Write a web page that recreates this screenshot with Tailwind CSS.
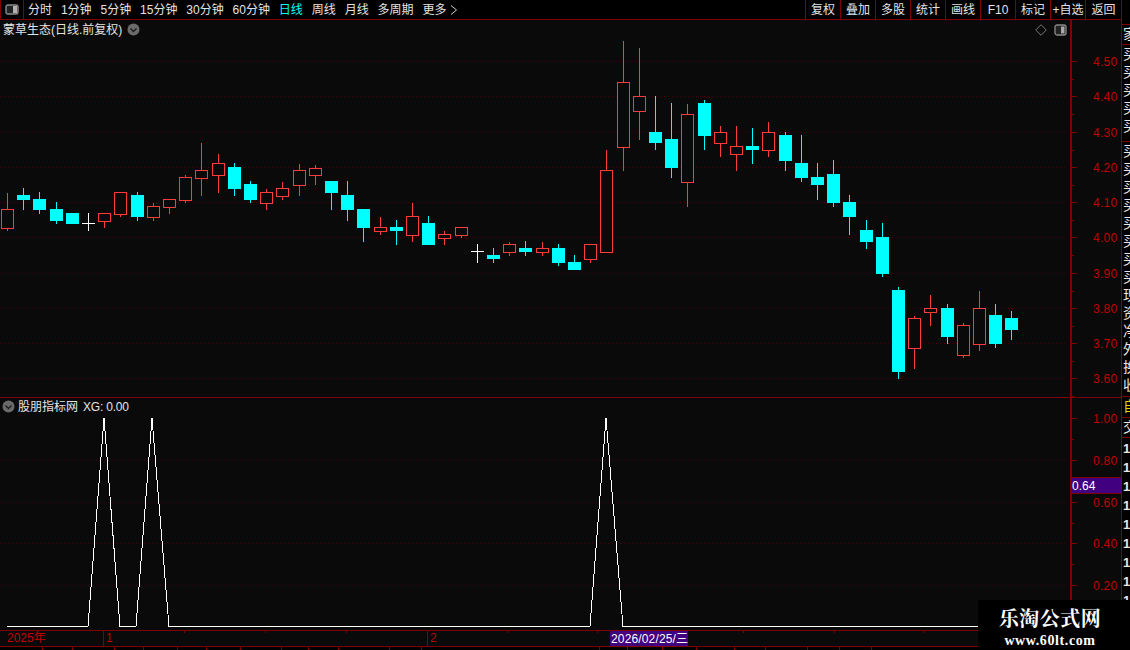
<!DOCTYPE html>
<html lang="zh">
<head>
  <meta charset="UTF-8" />
  <title>蒙草生态</title>
  <script src="https://cdn.jsdelivr.net/npm/@tailwindcss/browser@4"></script>
</head>
<body class="bg-black">
  <div class="relative flex w-[1130px] h-[650px] overflow-hidden bg-black text-[12px] leading-none text-[#e4e4e4] font-['Liberation_Sans','Noto_Sans_CJK_SC',sans-serif]">

    <!-- main column -->
    <div class="flex flex-col w-[1122px] shrink-0 bg-[#0a0a0a]">

      <!-- toolbar -->
      <div class="flex items-center h-5 shrink-0 border-b border-[#800000] bg-black">
        <div class="flex items-center justify-center w-6 h-full border-x border-[#800000]">
          <svg width="14" height="11" viewBox="0 0 14 11"><rect x="1" y="1" width="12" height="9" rx="2" fill="#222" stroke="#8a8a8a" stroke-width="1.4"/><rect x="8" y="2" width="4" height="7" fill="#b0b0b0"/></svg>
        </div>
        <div class="flex items-center gap-[8.9px] pl-1 whitespace-nowrap">
          <span>分时</span><span>1分钟</span><span>5分钟</span><span>15分钟</span><span>30分钟</span><span>60分钟</span>
          <span class="text-[#00ffff]">日线</span><span>周线</span><span>月线</span><span>多周期</span>
          <span class="flex items-center gap-1">更多<svg width="8" height="10" viewBox="0 0 8 10"><path d="M1 0.5 L6.5 5 L1 9.5" fill="none" stroke="#d0d0d0"/></svg></span>
        </div>
        <div class="flex h-full ml-auto">
          <span class="flex items-center justify-center w-[35px] border-l border-[#800000]">复权</span>
          <span class="flex items-center justify-center w-[35px] border-l border-[#800000]">叠加</span>
          <span class="flex items-center justify-center w-[35px] border-l border-[#800000]">多股</span>
          <span class="flex items-center justify-center w-[35px] border-l border-[#800000]">统计</span>
          <span class="flex items-center justify-center w-[35px] border-l border-[#800000]">画线</span>
          <span class="flex items-center justify-center w-[35px] border-l border-[#800000]">F10</span>
          <span class="flex items-center justify-center w-[35px] border-l border-[#800000]">标记</span>
          <span class="flex items-center justify-center w-[35px] border-l border-[#800000]">+自选</span>
          <span class="flex items-center justify-center w-[37px] border-x border-[#800000]">返回</span>
        </div>
      </div>

      <!-- price pane -->
      <div class="relative flex h-[378px] shrink-0 border-b border-[#800000]">
        <div class="relative w-[1070px] shrink-0">
          <svg id="priceChart" class="block" width="1070" height="377" viewBox="0 20 1070 377" shape-rendering="crispEdges"></svg>
          <div class="absolute left-[3px] top-[3px] flex items-center gap-[5px] whitespace-nowrap">
            <span>蒙草生态(日线.前复权)</span>
            <svg width="13" height="13" viewBox="0 0 13 13"><circle cx="6.5" cy="6.5" r="6" fill="#6a6a6a"/><path d="M3.5 5.5 L6.5 8.5 L9.5 5.5" fill="none" stroke="#1c1c1c" stroke-width="1.4"/></svg>
          </div>
          <div class="absolute right-[3px] top-[4px] flex items-center gap-[7px]">
            <svg width="12" height="12" viewBox="0 0 12 12"><path d="M6 0.7 L11.3 6 L6 11.3 L0.7 6 Z" fill="none" stroke="#777"/></svg>
            <svg width="13" height="12" viewBox="0 0 13 12"><rect x="1" y="1" width="11" height="10" rx="2" fill="#222" stroke="#8a8a8a" stroke-width="1.3"/><rect x="7" y="2.5" width="3.5" height="7" fill="#a8a8a8"/></svg>
          </div>
        </div>
        <div class="w-[52px] border-l-2 border-r border-[#800000]">
          <svg id="priceAxis" class="block fill-[#c00000] text-[12px] tracking-[0.3px]" width="49" height="377" viewBox="1072 20 49 377" shape-rendering="crispEdges"></svg>
        </div>
      </div>

      <!-- indicator pane -->
      <div class="relative flex h-[232px] shrink-0">
        <div class="relative w-[1070px] shrink-0">
          <svg id="subChart" class="block" width="1070" height="232" viewBox="0 398 1070 232"></svg>
          <div class="absolute left-[2px] top-[2px] flex items-center gap-[3px] whitespace-nowrap">
            <svg width="13" height="13" viewBox="0 0 13 13"><circle cx="6.5" cy="6.5" r="6" fill="#6a6a6a"/><path d="M3.5 5.5 L6.5 8.5 L9.5 5.5" fill="none" stroke="#1c1c1c" stroke-width="1.4"/></svg>
            <span>股朋指标网</span><span class="ml-[2px] tracking-[-0.2px]">XG: 0.00</span>
          </div>
        </div>
        <div class="relative w-[52px] border-l-2 border-r border-[#800000]">
          <svg id="subAxis" class="block fill-[#c00000] text-[12px] tracking-[0.3px]" width="49" height="232" viewBox="1072 398 49 232" shape-rendering="crispEdges"></svg>
          <div class="absolute left-0 top-[79px] flex items-center w-[49px] h-[17px] border-y border-[#800000] bg-[#400080] text-white">0.64</div>
        </div>
      </div>

      <!-- time axis -->
      <div class="relative h-[17px] shrink-0 border-y border-[#800000] text-[#c00000]">
        <span class="absolute left-[7px] top-[1px]">2025年</span>
        <span class="absolute left-[103px] top-0 h-full pl-[2px] pt-[1px] border-l border-[#800000]">1</span>
        <span class="absolute left-[427px] top-0 h-full pl-[2px] pt-[1px] border-l border-[#800000]">2</span>
        <span class="absolute left-[184px] top-0 h-[2px] border-l border-[#800000]"></span>
        <span class="absolute left-[265px] top-0 h-[2px] border-l border-[#800000]"></span>
        <span class="absolute left-[346px] top-0 h-[2px] border-l border-[#800000]"></span>
        <span class="absolute left-[508px] top-0 h-[2px] border-l border-[#800000]"></span>
        <span class="absolute left-[597px] top-0 h-[2px] border-l border-[#800000]"></span>
        <span class="absolute left-[743px] top-0 h-[2px] border-l border-[#800000]"></span>
        <span class="absolute left-[834px] top-0 h-[2px] border-l border-[#800000]"></span>
        <span class="absolute left-[923px] top-0 h-[2px] border-l border-[#800000]"></span>
        <span class="absolute left-[610px] top-0 flex items-center w-[78px] h-[15px] pl-[1px] bg-[#400080] text-white tracking-[0.15px] whitespace-nowrap">2026/02/25/三</span>
      </div>

      <!-- status row, cut off by the window -->
      <div id="statusRow" class="flex h-[3px] shrink-0 overflow-hidden bg-black"></div>
    </div>

    <!-- neighbouring list, only its left edge is in view -->
    <div class="flex flex-col w-2 shrink-0 overflow-hidden text-[14px] leading-[18px] whitespace-nowrap bg-black text-[#e8e8e8]">
      <div class="h-[25px] shrink-0 border-b border-[#800000]"></div>
      <div class="h-5 shrink-0 pl-[1px] border-b border-[#800000]">家</div>
      <div class="h-[97px] shrink-0 pl-[1px] border-b border-[#800000]">
        <div>买</div><div>买</div><div>买</div><div>买</div><div>买</div>
      </div>
      <div class="h-[255px] shrink-0 pl-[1px] border-b border-[#800000]">
        <div>买</div><div>买</div><div>买</div><div>买</div><div>买</div><div>买</div><div>买</div><div>买</div>
        <div>现</div><div>资</div><div>净</div><div>外</div><div>换</div><div>收</div>
      </div>
      <div class="h-[21px] shrink-0 pl-[1px] border-b border-[#800000] text-[#d8d800]">自</div>
      <div class="h-5 shrink-0 pl-[1px] border-b border-[#800000]">交</div>
      <div class="pt-[1px] pl-[1px] text-[13px] leading-[19px] font-bold">
        <div>1</div><div>1</div><div>1</div><div>1</div><div>1</div><div>1</div><div>1</div><div>1</div><div>1</div><div>1</div><div>1</div>
      </div>
    </div>

    <!-- watermark stamped over the corner -->
    <div class="absolute left-[978px] top-[600px] flex flex-col items-center w-[152px] h-[50px] pr-[8px] pt-[7px] bg-black text-white font-['Liberation_Serif','Noto_Serif_CJK_SC','Noto_Sans_CJK_SC',serif] font-bold">
      <span class="text-[20px] leading-[24px] tracking-[0.5px]">乐淘公式网</span>
      <span class="mt-[2px] text-[14px] leading-[16px] tracking-[0.6px]">www.60lt.com</span>
    </div>
  </div>

  <script>
    const NS = 'http://www.w3.org/2000/svg';
    const UP = '#ff3c3c', DOWN = '#00ffff', CROSS = '#ffffff';

    // high, body top, body bottom, low (screen y), kind
    const candles = [
      [193,209,228,230,'r'],[188,195,199,209,'c'],[192,199,209,213,'c'],[202,209,220,223,'c'],[213,213,223,223,'c'],
      [213,223,223,230,'x'],[213,213,221,227,'r'],[192,192,214,216,'r'],[192,195,216,220,'c'],[203,206,217,220,'r'],
      [199,199,207,213,'r'],[175,177,200,202,'r'],[143,170,178,195,'r'],[154,163,175,192,'r'],[163,167,188,195,'c'],
      [181,184,199,202,'c'],[189,192,203,209,'r'],[182,188,196,199,'r'],[164,170,185,195,'r'],[165,168,175,184,'r'],
      [181,181,192,209,'c'],[181,195,209,220,'c'],[209,209,227,241,'c'],[217,227,231,234,'r'],[220,227,230,244,'c'],
      [203,216,235,241,'r'],[216,223,244,244,'c'],[231,234,238,244,'r'],[227,227,235,237,'r'],[244,251,251,262,'x'],
      [248,255,258,262,'c'],[242,244,252,255,'r'],[241,248,251,255,'c'],[242,248,252,255,'r'],[244,248,262,265,'c'],
      [255,262,269,269,'c'],[244,244,259,262,'r'],[150,170,252,252,'r'],[41,82,147,170,'r'],[48,96,111,139,'r'],
      [96,132,142,149,'c'],[103,139,167,177,'c'],[104,114,182,206,'r'],[100,103,135,149,'c'],[126,132,143,156,'r'],
      [126,146,154,170,'r'],[128,146,149,163,'c'],[122,132,150,156,'r'],[132,135,160,170,'c'],[135,163,177,181,'c'],
      [163,177,184,199,'c'],[160,174,202,206,'c'],[195,202,216,234,'c'],[220,230,241,248,'c'],[223,237,273,276,'c'],
      [287,290,371,378,'c'],[316,318,348,368,'r'],[295,308,312,325,'r'],[304,308,336,343,'c'],[323,325,355,357,'r'],
      [291,308,344,350,'r'],[304,315,343,347,'c'],[311,318,329,339,'c']
    ];

    function el(parent, name, attrs, text) {
      const node = document.createElementNS(NS, name);
      for (const k in attrs) node.setAttribute(k, attrs[k]);
      if (text) node.textContent = text;
      parent.appendChild(node);
      return node;
    }
    function dots(svg, y) {
      el(svg, 'line', { x1: 0, x2: 1067, y1: y + 0.5, y2: y + 0.5, stroke: '#4e0000', 'stroke-dasharray': '1 3' });
    }

    // price chart
    const price = document.getElementById('priceChart');
    [61, 96, 132, 167, 202, 237, 273, 308, 343, 378].forEach(y => dots(price, y));
    candles.forEach((c, i) => {
      const [high, top, bot, low, kind] = c;
      const x = Math.round(1 + i * 16.2);
      const color = kind === 'r' ? UP : kind === 'c' ? DOWN : CROSS;
      el(price, 'rect', { x: x + 6, y: high, width: 1, height: low - high + 1, fill: color });
      if (kind === 'x') el(price, 'rect', { x, y: top, width: 13, height: 1, fill: color });
      if (kind === 'c') el(price, 'rect', { x, y: top, width: 13, height: bot - top + 1, fill: color });
      if (kind === 'r') el(price, 'rect', { x: x + 0.5, y: top + 0.5, width: 12, height: bot - top, fill: '#0a0a0a', stroke: color });
    });

    // axes
    function axis(id, ticks, labels) {
      const svg = document.getElementById(id);
      ticks.forEach(([y, major]) => el(svg, 'rect', { x: 1072, y, width: major ? 5 : 2, height: 1, fill: '#800000' }));
      labels.forEach(([y, t]) => el(svg, 'text', { x: 1093, y: y + 4.5, 'shape-rendering': 'auto' }, t));
    }
    const priceLabels = [[61,'4.50'],[96,'4.40'],[132,'4.30'],[167,'4.20'],[202,'4.10'],[237,'4.00'],[273,'3.90'],[308,'3.80'],[343,'3.70'],[378,'3.60']];
    const priceTicks = [];
    priceLabels.forEach(([y]) => { priceTicks.push([y, true], [y + 18, false]); });
    axis('priceAxis', priceTicks, priceLabels);

    const subLabels = [[418,'1.00'],[460,'0.80'],[502,'0.60'],[543,'0.40'],[585,'0.20']];
    const subTicks = [];
    subLabels.forEach(([y]) => { subTicks.push([y, true], [y + 21, false]); });
    axis('subAxis', subTicks, subLabels);

    // XG signal line
    const sub = document.getElementById('subChart');
    [460, 502, 543, 585].forEach(y => dots(sub, y));
    el(sub, 'polyline', {
      fill: 'none', stroke: '#ffffff', 'stroke-width': 1, 'shape-rendering': 'crispEdges',
      points: '7,626.5 88,626.5 104,418 120,626.5 136,626.5 152,418 169,626.5 590,626.5 606,418 623,626.5 978,626.5'
    });

    // bottom status row
    const row = document.getElementById('statusRow');
    [43,30,42,29,34,29,34,41,27,30,51,32,178,28,35,34,38,31,42,32,32,250].forEach(w => {
      const cell = document.createElement('div');
      cell.className = 'shrink-0 h-full border-r border-[#800000]';
      cell.style.width = w + 'px';
      row.appendChild(cell);
    });
  </script>
</body>
</html>
